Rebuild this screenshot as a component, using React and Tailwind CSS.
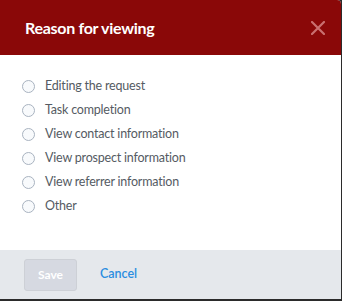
import React from "react";

const items = [
  "Editing the request",
  "Task completion",
  "View contact information",
  "View prospect information",
  "View referrer information",
  "Other",
];

export default function App() {
  return (
    <div className="w-[342px] h-[301px] bg-[#2b2b2b]" style={{ fontFamily: "Lato, 'Noto Sans', sans-serif" }}>
      <div className="w-[341px] h-[299px] bg-white rounded-tr-[4px] overflow-hidden flex flex-col">
        <div className="h-[55px] bg-[#8a0808] flex items-center justify-between pl-[25px] pr-[15px] shrink-0">
          <span className="text-white font-bold text-[16px] tracking-[-0.3px] leading-none">Reason for viewing</span>
          <svg width="14" height="14" viewBox="0 0 14 14" className="mr-[1px]">
            <path d="M1 1 L13 13 M13 1 L1 13" stroke="#c97070" strokeWidth="2.2" strokeLinecap="round" />
          </svg>
        </div>
        <div className="flex-1 flex flex-col pt-[24px] pl-[22px] gap-[10px]">
          {items.map((t) => (
            <label key={t} className="flex items-center h-[14px] gap-[10px]">
              <span className="w-[13px] h-[13px] rounded-full border border-[#a9b3c0] bg-[#f8fafc] shrink-0" />
              <span className="text-[12.5px] tracking-[-0.2px] text-[#555b63] leading-none">{t}</span>
            </label>
          ))}
        </div>
        <div className="h-[49px] bg-[#e5e8ec] flex items-center pl-[24px] gap-[23px] shrink-0">
          <button className="w-[53px] h-[32px] rounded-[3px] bg-[#d6d9e1] border border-[#cdd0d6] text-white text-[12px] font-bold">Save</button>
          <span className="text-[12.5px] font-semibold text-[#2a8de0]">Cancel</span>
        </div>
      </div>
    </div>
  );
}
